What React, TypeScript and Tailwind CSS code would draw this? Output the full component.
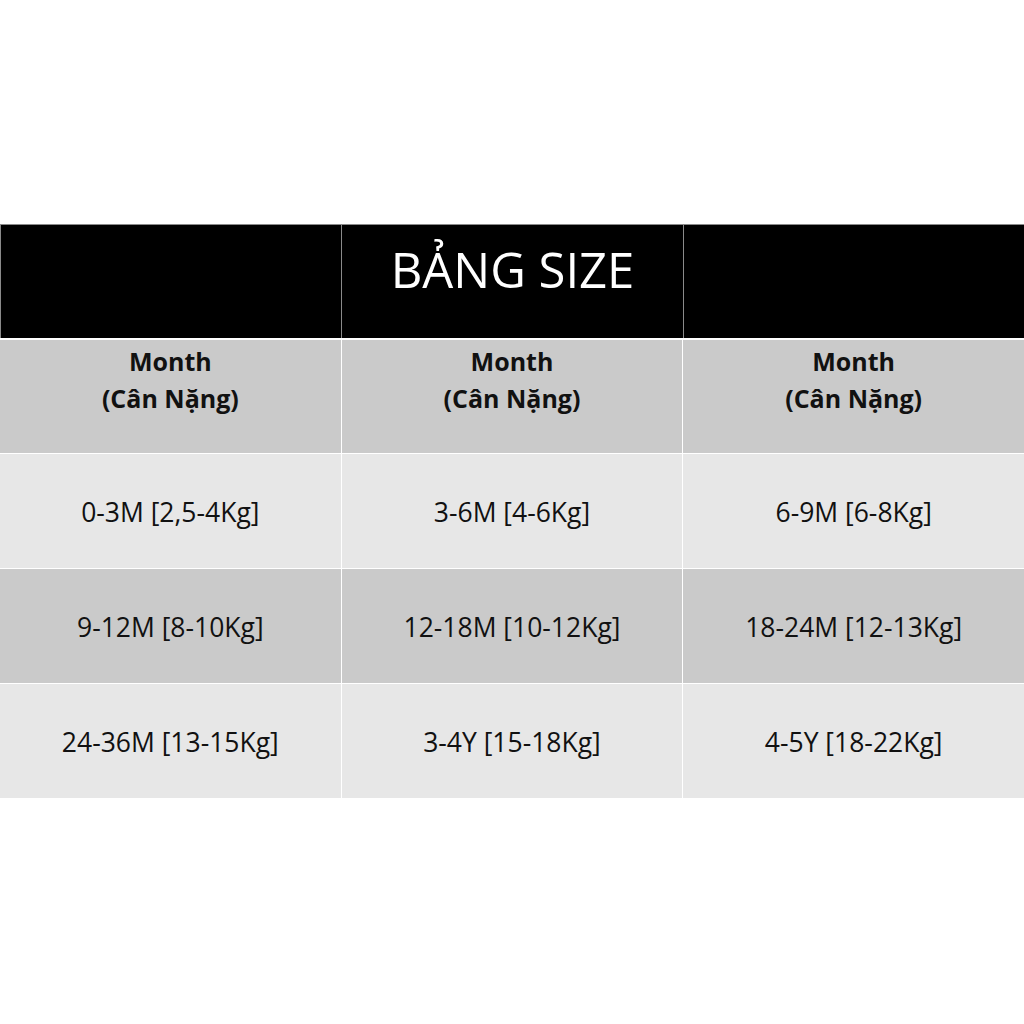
export default function App() {
  const rows = [
    ["0-3M [2,5-4Kg]", "3-6M [4-6Kg]", "6-9M [6-8Kg]"],
    ["9-12M [8-10Kg]", "12-18M [10-12Kg]", "18-24M [12-13Kg]"],
    ["24-36M [13-15Kg]", "3-4Y [15-18Kg]", "4-5Y [18-22Kg]"],
  ];
  const font = { fontFamily: '"Open Sans", "Noto Sans", sans-serif' };
  return (
    <div className="w-[1024px] h-[1024px] bg-white" style={font}>
      <div className="pt-[224px]">
        <div className="grid grid-cols-3 gap-px bg-[#8a8a8a] border-t border-l border-[#8a8a8a] h-[114px]">
          <div className="bg-black" />
          <div className="bg-black flex justify-center pt-[20px]">
            <span className="text-white text-[49px] leading-[49px]">BẢNG SIZE</span>
          </div>
          <div className="bg-black" />
        </div>
        <div className="h-[2px] bg-white" />
        <div className="grid grid-cols-3 gap-px bg-white">
          {[0, 1, 2].map((i) => (
            <div key={i} className="bg-[#cacaca] h-[113px] flex flex-col items-center pt-[3px] text-[25px] leading-[37px] font-bold text-[#111]">
              <span>Month</span>
              <span>(Cân Nặng)</span>
            </div>
          ))}
        </div>
        {rows.map((r, ri) => (
          <div key={ri} className="grid grid-cols-3 gap-px bg-white pt-px">
            {r.map((c, ci) => (
              <div
                key={ci}
                className={
                  (ri % 2 === 0 ? "bg-[#e7e7e7]" : "bg-[#cacaca]") +
                  " h-[114px] flex items-center justify-center pt-[3px] text-[26.5px] text-[#111]"
                }
              >
                {c}
              </div>
            ))}
          </div>
        ))}
      </div>
    </div>
  );
}
